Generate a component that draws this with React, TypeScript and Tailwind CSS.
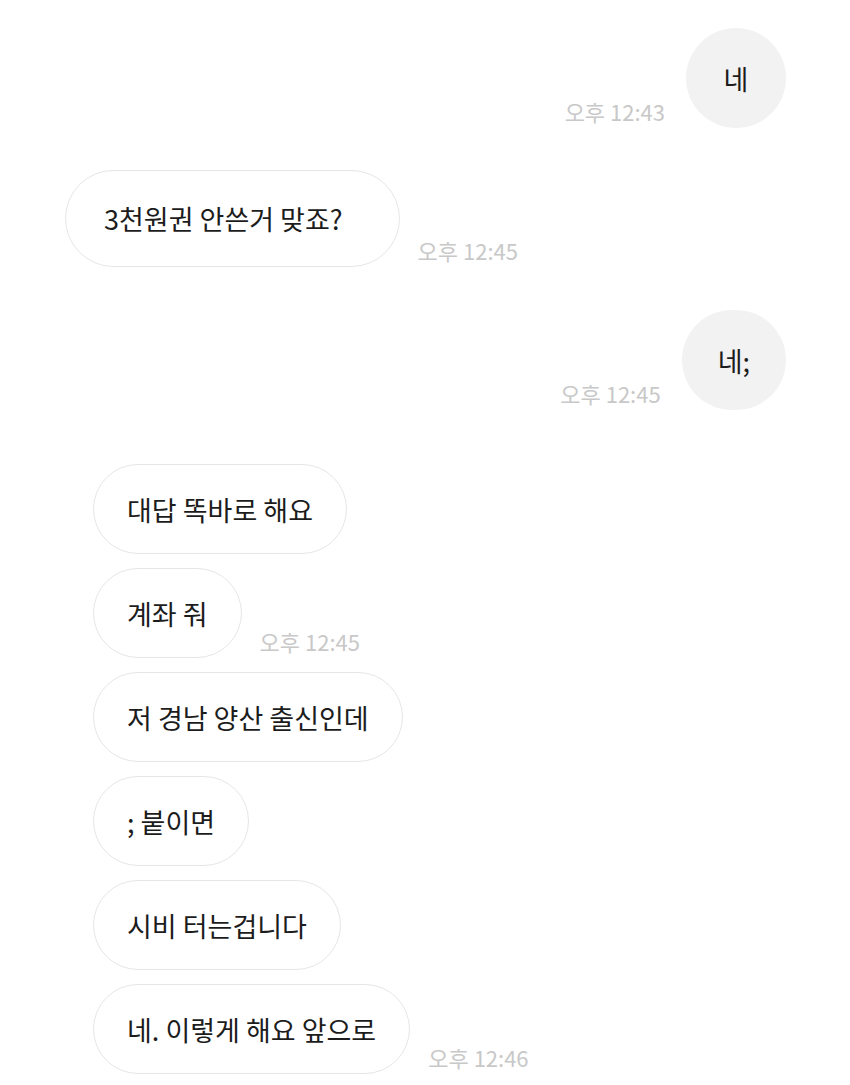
type Side = 'in' | 'out'

function Time({ children }: { children: string }) {
  return (
    <span className="mb-[6px] whitespace-nowrap text-[22px] leading-none text-[#c8c8c8]">
      {children}
    </span>
  )
}

function Bubble({ side, children, className = '' }: { side: Side; children: string; className?: string }) {
  const look =
    side === 'out'
      ? 'bg-[#f2f2f2] px-[36px] min-w-[100px] justify-center'
      : 'bg-white border-[1.5px] border-[#e6e6e6] px-[33px]'
  return (
    <div
      className={`flex items-center rounded-full whitespace-nowrap text-[27px] leading-none text-[#1c1c1c] ${look} ${className}`}
    >
      {children}
    </div>
  )
}

function Outgoing({ text, time, className = '' }: { text: string; time: string; className?: string }) {
  return (
    <div className={`flex items-end justify-end gap-[21px] pr-[64px] ${className}`}>
      <Time>{time}</Time>
      <Bubble side="out" className="h-[100px]">
        {text}
      </Bubble>
    </div>
  )
}

const group = [
  { text: '대답 똑바로 해요' },
  { text: '계좌 줘', time: '오후 12:45' },
  { text: '저 경남 양산 출신인데' },
  { text: '; 붙이면' },
  { text: '시비 터는겁니다' },
  { text: '네. 이렇게 해요 앞으로', time: '오후 12:46' },
]

export default function App() {
  return (
    <div
      className="h-[1085px] w-[850px] overflow-hidden bg-white pt-[28px]"
      style={{ fontFamily: '"Noto Sans CJK KR", "Noto Sans", sans-serif' }}
    >
      <Outgoing text="네" time="오후 12:43" />

      <div className="mt-[42px] flex items-end gap-[18px] pl-[65px]">
        <Bubble side="in" className="h-[97px] pl-[38px] pr-[56px]">
          3천원권 안쓴거 맞죠?
        </Bubble>
        <Time>오후 12:45</Time>
      </div>

      <Outgoing text="네;" time="오후 12:45" className="mt-[43px]" />

      <div className="mt-[54px] flex flex-col gap-[14px] pl-[93px]">
        {group.map((m) => (
          <div key={m.text} className="flex items-end gap-[18px]">
            <Bubble side="in" className="h-[90px]">
              {m.text}
            </Bubble>
            {m.time && <Time>{m.time}</Time>}
          </div>
        ))}
      </div>
    </div>
  )
}
